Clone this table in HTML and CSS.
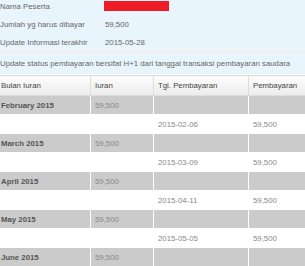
FILE: index.html
```html
<!DOCTYPE html>
<html>
<head>
<meta charset="utf-8">
<link rel="stylesheet" href="styles.css">
</head>
<body>
<div class="page">
  <div class="info">
    <div class="info-row"><span class="label">Nama Peserta</span><span class="value"><span class="redact"></span></span></div>
    <div class="info-row"><span class="label">Jumlah yg harus dibayar</span><span class="value">59,500</span></div>
    <div class="info-row"><span class="label">Update Informasi terakhir</span><span class="value">2015-05-28</span></div>
  </div>
  <div class="sep"></div>
  <div class="notice">Update status pembayaran bersifat H+1 dari tanggal transaksi pembayaran saudara</div>
  <table class="pay">
    <colgroup><col class="c1"><col class="c2"><col class="c3"><col class="c4"></colgroup>
    <thead>
      <tr><th>Bulan Iuran</th><th>Iuran</th><th>Tgl. Pembayaran</th><th>Pembayaran</th></tr>
    </thead>
    <tbody>
      <tr class="month"><td>February 2015</td><td>59,500</td><td></td><td></td></tr>
      <tr class="paid"><td></td><td></td><td>2015-02-06</td><td>59,500</td></tr>
      <tr class="month"><td>March 2015</td><td>59,500</td><td></td><td></td></tr>
      <tr class="paid"><td></td><td></td><td>2015-03-09</td><td>59,500</td></tr>
      <tr class="month"><td>April 2015</td><td>59,500</td><td></td><td></td></tr>
      <tr class="paid"><td></td><td></td><td>2015-04-11</td><td>59,500</td></tr>
      <tr class="month"><td>May 2015</td><td>59,500</td><td></td><td></td></tr>
      <tr class="paid"><td></td><td></td><td>2015-05-05</td><td>59,500</td></tr>
      <tr class="month"><td>June 2015</td><td>59,500</td><td></td><td></td></tr>
    </tbody>
  </table>
</div>
</body>
</html>
```
FILE: styles.css
```css
html, body {
  margin: 0;
  padding: 0;
  background: #ffffff;
  overflow: hidden;
}
body {
  font-family: "Liberation Sans", Arial, sans-serif;
  font-size: 7.8px;
  color: #666666;
}
.page {
  width: 309px;
  margin-left: -4px;
  margin-top: -3px;
}
.info {
  background: #e9f5fd;
  padding-left: 4px;
  height: 53px;
}
.info-row {
  display: flex;
  align-items: center;
  height: 18px;
}
.label {
  width: 105px;
}
.value {
  display: flex;
  align-items: center;
}
.redact {
  display: block;
  width: 65px;
  height: 10px;
  margin-left: -1px;
  background: #ee1c25;
}
.sep {
  height: 3px;
  background: #efefef;
}
.notice {
  background: #e9f5fd;
  height: 21px;
  line-height: 21px;
  padding-left: 4px;
  white-space: nowrap;
  margin-bottom: 1px;
}
.pay {
  border-collapse: collapse;
  table-layout: fixed;
  width: 309px;
}
.c1 { width: 94px; }
.c2 { width: 63px; }
.c3 { width: 95px; }
.c4 { width: 57px; }
.pay th {
  height: 19px;
  padding: 0 4px;
  text-align: left;
  font-weight: normal;
  color: #444444;
  white-space: nowrap;
  overflow: hidden;
  background: linear-gradient(#fdfdfd, #ececec);
  border: 1px solid #dddddd;
}
.pay td {
  height: 19px;
  padding: 0 4px;
  border: 1px solid #ffffff;
  color: #888888;
  white-space: nowrap;
  overflow: hidden;
  box-sizing: border-box;
}
.pay tr.month td {
  background: #cbcbcb;
}
.pay tr.month td:first-child {
  font-weight: bold;
  color: #555555;
}
.pay tr.paid td {
  background: #ffffff;
}
```
